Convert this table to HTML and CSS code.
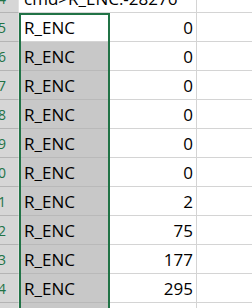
FILE: index.html
```html
<!DOCTYPE html>
<html>
<head>
<meta charset="utf-8">
<link rel="stylesheet" href="styles.css">
</head>
<body>
<div class="viewport">
  <div class="sheet">
    <div class="hdr top">14</div><div class="cell a overflow top">cmd&gt;R_ENC:-28276</div><div class="cell b top"></div><div class="cell c top"></div>
    <div class="hdr">15</div><div class="cell a active">R_ENC</div><div class="cell b num">0</div><div class="cell c"></div>
    <div class="hdr">16</div><div class="cell a sel">R_ENC</div><div class="cell b num">0</div><div class="cell c"></div>
    <div class="hdr">17</div><div class="cell a sel">R_ENC</div><div class="cell b num">0</div><div class="cell c"></div>
    <div class="hdr">18</div><div class="cell a sel">R_ENC</div><div class="cell b num">0</div><div class="cell c"></div>
    <div class="hdr">19</div><div class="cell a sel">R_ENC</div><div class="cell b num">0</div><div class="cell c"></div>
    <div class="hdr">20</div><div class="cell a sel">R_ENC</div><div class="cell b num">0</div><div class="cell c"></div>
    <div class="hdr">21</div><div class="cell a sel">R_ENC</div><div class="cell b num">2</div><div class="cell c"></div>
    <div class="hdr">22</div><div class="cell a sel">R_ENC</div><div class="cell b num">75</div><div class="cell c"></div>
    <div class="hdr">23</div><div class="cell a sel">R_ENC</div><div class="cell b num">177</div><div class="cell c"></div>
    <div class="hdr">24</div><div class="cell a sel">R_ENC</div><div class="cell b num">295</div><div class="cell c"></div>
    <div class="hdr">25</div><div class="cell a sel"></div><div class="cell b"></div><div class="cell c"></div>
  </div>
  <div class="selection"></div>
</div>
</body>
</html>
```
FILE: styles.css
```css
html, body {
  margin: 0;
  padding: 0;
  background: #ffffff;
  overflow: hidden;
}
.viewport {
  position: relative;
  width: 252px;
  height: 308px;
  overflow: hidden;
}
.sheet {
  display: grid;
  grid-template-columns: 41px 90px 88px 80px;
  grid-auto-rows: 29px;
  margin-left: -22px;
  font-family: "Open Sans", "Noto Sans", sans-serif;
}
.sheet > .top {
  height: 13px;
  align-self: start;
}
.sheet {
  grid-template-rows: 13px;
}
.hdr {
  box-sizing: border-box;
  background: #d6d6d6;
  border-right: 1px solid #e2e2e2;
  border-bottom: 1px solid #b4b4b4;
  color: #217346;
  font-size: 14px;
  line-height: 18px;
  text-align: center;
  display: flex;
  align-items: flex-end;
  justify-content: center;
  padding-bottom: 4px;
  overflow: hidden;
}
.cell {
  box-sizing: border-box;
  border-right: 1px solid #d4d4d4;
  border-bottom: 1px solid #d4d4d4;
  font-size: 17px;
  line-height: 20px;
  color: #000;
  display: flex;
  align-items: flex-end;
  padding: 0 3px 3px 5px;
  white-space: nowrap;
  overflow: hidden;
}
.cell.overflow {
  overflow: visible;
  border-right: none;
  position: relative;
  z-index: 1;
}
.cell.num {
  justify-content: flex-end;
}
.cell.sel {
  background: #c8c8c8;
  border-bottom-color: #b9b9b9;
  border-right-color: #b9b9b9;
}
.cell.active {
  background: #ffffff;
}
.selection {
  position: absolute;
  left: 19px;
  top: 13px;
  width: 91px;
  height: 320px;
  box-sizing: border-box;
  border: 2px solid #217346;
  pointer-events: none;
}
```
